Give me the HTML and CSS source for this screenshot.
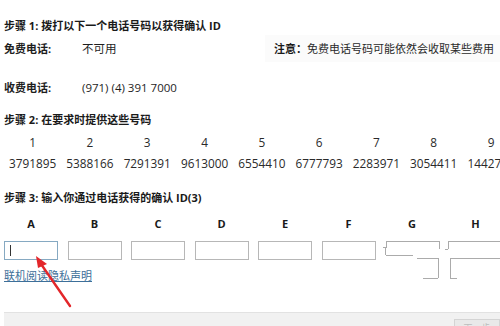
FILE: index.html
```html
<!DOCTYPE html>
<html lang="zh-CN">
<head>
<meta charset="utf-8">
<title>电话激活</title>
<link rel="stylesheet" href="styles.css">
</head>
<body>
<div class="page">
  <h2 class="step step1">步骤 1: 拨打以下一个电话号码以获得确认 ID</h2>
  <div class="phone-row free">
    <span class="label">免费电话:</span>
    <span class="value">不可用</span>
    <span class="note"><b>注意：</b>免费电话号码可能依然会收取某些费用</span>
  </div>
  <div class="phone-row toll">
    <span class="label">收费电话:</span>
    <span class="value">(971) (4) 391 7000</span>
  </div>

  <h2 class="step step2">步骤 2: 在要求时提供这些号码</h2>
  <div class="codes">
    <div class="code"><span class="idx">1</span><span class="num">3791895</span></div>
    <div class="code"><span class="idx">2</span><span class="num">5388166</span></div>
    <div class="code"><span class="idx">3</span><span class="num">7291391</span></div>
    <div class="code"><span class="idx">4</span><span class="num">9613000</span></div>
    <div class="code"><span class="idx">5</span><span class="num">6554410</span></div>
    <div class="code"><span class="idx">6</span><span class="num">6777793</span></div>
    <div class="code"><span class="idx">7</span><span class="num">2283971</span></div>
    <div class="code"><span class="idx">8</span><span class="num">3054411</span></div>
    <div class="code"><span class="idx">9</span><span class="num">1442715</span></div>
  </div>

  <h2 class="step step3">步骤 3: 输入你通过电话获得的确认 ID(3)</h2>
  <div class="ids">
    <div class="id-cell"><span class="letter">A</span><div class="box active"><span class="caret"></span></div></div>
    <div class="id-cell"><span class="letter">B</span><div class="box"></div></div>
    <div class="id-cell"><span class="letter">C</span><div class="box"></div></div>
    <div class="id-cell"><span class="letter">D</span><div class="box"></div></div>
    <div class="id-cell"><span class="letter">E</span><div class="box"></div></div>
    <div class="id-cell"><span class="letter">F</span><div class="box"></div></div>
    <div class="id-cell"><span class="letter">G</span>
      <div class="glitch">
        <span class="ln h" style="left:1px;top:0;width:54px"></span>
        <span class="ln v" style="left:1px;top:0;height:7px"></span>
        <span class="ln h" style="left:-2px;top:6px;width:3px"></span>
        <span class="ln v" style="left:0;top:7px;height:7px"></span>
        <span class="ln h" style="left:1px;top:14px;width:27px"></span>
        <span class="ln v" style="left:54px;top:0;height:8px"></span>
        <span class="ln h" style="left:32px;top:17px;width:22px"></span>
        <span class="ln v" style="left:53px;top:17px;height:20px"></span>
        <span class="ln h" style="left:38px;top:37px;width:15px"></span>
      </div>
    </div>
    <div class="id-cell"><span class="letter">H</span>
      <div class="glitch">
        <span class="ln h" style="left:-1px;top:0;width:60px"></span>
        <span class="ln v" style="left:-1px;top:0;height:8px"></span>
        <span class="ln h" style="left:-4px;top:8px;width:3px"></span>
        <span class="ln h" style="left:1px;top:17px;width:60px"></span>
        <span class="ln v" style="left:1px;top:17px;height:20px"></span>
        <span class="ln h" style="left:1px;top:37px;width:7px"></span>
      </div>
    </div>
  </div>

  <a class="privacy" href="#">联机阅读隐私声明</a>

  <div class="footer">
    <span class="btn">下一步</span>
  </div>
</div>

<svg class="arrow" width="500" height="326" viewBox="0 0 500 326">
  <line x1="70" y1="306" x2="41" y2="264" stroke="#e3262a" stroke-width="2.4" stroke-linecap="round"/>
  <polygon points="36,256 47,264 38,268" fill="#e3262a"/>
</svg>
</body>
</html>
```

FILE: styles.css
```css
html, body {
  margin: 0;
  padding: 0;
  background: #ffffff;
  width: 500px;
  height: 326px;
  overflow: hidden;
}

body {
  position: relative;
  font-family: "Open Sans", "Noto Sans CJK SC", sans-serif;
  font-size: 11px;
  line-height: 16px;
  color: #1e1e1e;
}

.page {
  padding-top: 18px;
}

.step {
  margin: 0;
  padding-left: 4px;
  font-size: 11px;
  line-height: 16px;
  font-weight: 700;
  color: #1a1a1a;
  white-space: nowrap;
}

.phone-row {
  display: grid;
  grid-template-columns: 78px 183px 1fr;
  align-items: center;
  padding-left: 4px;
  white-space: nowrap;
}

.phone-row .label {
  font-weight: 700;
}

.phone-row .value {
  font-size: 11.5px;
}

.phone-row.free {
  margin-top: 1px;
  height: 27px;
}

.phone-row.toll {
  margin-top: 18px;
  height: 16px;
}

.note {
  height: 27px;
  line-height: 27px;
  padding-left: 9px;
  background: #fbfbfb;
  color: #2a2a2a;
}

.note b {
  font-weight: 700;
  color: #1a1a1a;
}

.step2 {
  margin-top: 16px;
}

.codes {
  display: grid;
  grid-template-columns: repeat(9, 57.3px);
  padding-left: 4px;
  margin-top: 6px;
  width: 520px;
}

.code {
  display: flex;
  flex-direction: column;
  align-items: center;
  gap: 5px;
  font-size: 11.8px;
  color: #2a2a2a;
}

.step3 {
  margin-top: 19px;
}

.ids {
  display: flex;
  gap: 9.5px;
  padding-left: 4px;
  margin-top: 10px;
  width: 520px;
}

.id-cell {
  display: flex;
  flex-direction: column;
  align-items: center;
  width: 54px;
  flex: none;
}

.letter {
  font-weight: 700;
  font-size: 11px;
  line-height: 16px;
  color: #1a1a1a;
}

.box {
  box-sizing: border-box;
  margin-top: 9px;
  width: 54px;
  height: 19px;
  border: 1px solid #b7b7b7;
  background: #ffffff;
  position: relative;
}

.box.active {
  border-color: #86a9c2;
}

.caret {
  position: absolute;
  left: 5px;
  top: 3px;
  width: 1px;
  height: 11px;
  background: #333333;
}

.glitch {
  position: relative;
  margin-top: 9px;
  width: 54px;
  height: 19px;
}

.ln {
  position: absolute;
  background: #ababab;
}

.ln.h {
  height: 1px;
}

.ln.v {
  width: 1px;
}

.privacy {
  display: inline-block;
  margin-top: 8px;
  margin-left: 4px;
  color: #3d6f99;
  text-decoration: underline;
  font-size: 11px;
  line-height: 16px;
}

.footer {
  margin-top: 28px;
  margin-left: 4px;
  height: 20px;
  border-top: 1px solid #e2e2e2;
  background: #f1f1f1;
  display: flex;
  justify-content: flex-end;
  padding-top: 6px;
}

.btn {
  box-sizing: border-box;
  width: 46px;
  height: 18px;
  border: 1px solid #d4d4d4;
  background: #e9e9e9;
  color: #bdbdbd;
  font-size: 9px;
  line-height: 16px;
  text-align: center;
}

.arrow {
  position: absolute;
  left: 0;
  top: 0;
  pointer-events: none;
}
```
